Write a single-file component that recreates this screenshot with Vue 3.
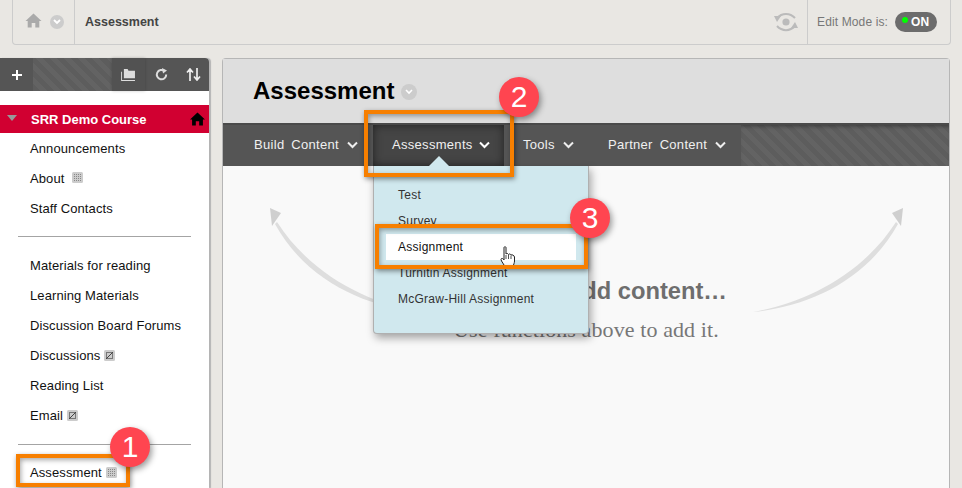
<script setup>
const groups = [
  [
    { label: 'Announcements' },
    { label: 'About', mark: 'grid', wide: true },
    { label: 'Staff Contacts' }
  ],
  [
    { label: 'Materials for reading' },
    { label: 'Learning Materials' },
    { label: 'Discussion Board Forums' },
    { label: 'Discussions', mark: 'slash' },
    { label: 'Reading List' },
    { label: 'Email', mark: 'slash' }
  ],
  [{ label: 'Assessment', mark: 'grid' }]
]
const tabs = [
  { label: 'Build Content' },
  { label: 'Assessments', active: true },
  { label: 'Tools' },
  { label: 'Partner Content' }
]
const menu = ['Test', 'Survey', 'Assignment', 'Turnitin Assignment', 'McGraw-Hill Assignment']
const homePath = 'M8 0.5 L16 8 L13.8 8 L13.8 14.5 L9.8 14.5 L9.8 10 L6.2 10 L6.2 14.5 L2.2 14.5 L2.2 8 L0 8 Z'
const shaft = 'M753 312 C800 304 860 278 896 222 L898 224 C866 282 806 307 753 312 Z'
const head = 'M903 208 L892 213 L901 226 Z'
</script>

<template>
  <div class="page">
    <header class="topbar">
      <div class="crumb-icons">
        <svg class="home" width="17" height="15" viewBox="0 0 16 15"><path :d="homePath" fill="#aaa" /></svg>
        <span class="round-btn">
          <svg width="8" height="6" viewBox="0 0 8 6"><path d="M1 1 L4 4 L7 1" fill="none" stroke="#fff" stroke-width="1.8" /></svg>
        </span>
      </div>
      <div class="crumb-title">Assessment</div>
      <svg class="eye" width="24" height="20" viewBox="0 0 24 20">
        <path d="M3 6 C8 0.5 16 0.5 21 6" fill="none" stroke="#bbb" stroke-width="2" />
        <path d="M21 14 C16 19.5 8 19.5 3 14" fill="none" stroke="#bbb" stroke-width="2" />
        <circle cx="12" cy="10" r="3.6" fill="#bbb" />
        <path d="M0 4 L7 4 L3 10 Z" fill="#bbb" />
        <path d="M24 16 L17 16 L21 10 Z" fill="#bbb" />
      </svg>
      <div class="edit-mode">
        <span class="edit-label">Edit Mode is:</span>
        <span class="toggle"><i class="led"></i>ON</span>
      </div>
    </header>

    <div class="columns">
      <aside class="sidebar">
        <div class="tools">
          <div class="tool plus">
            <svg width="12" height="12" viewBox="0 0 12 12"><path d="M6 1 V11 M1 6 H11" stroke="#fff" stroke-width="2" /></svg>
          </div>
          <div class="hatch tool-fill"></div>
          <div class="tool folder">
            <svg width="15" height="12" viewBox="0 0 16 13">
              <path d="M0 3 H1 V12 H15 V13 H0 Z M3 0 H7 L8 2 H15 V10 H3 Z" fill="#ddd" />
            </svg>
          </div>
          <div class="tool refresh">
            <svg width="13" height="13" viewBox="0 0 13 13">
              <path d="M9.5 3 A4.7 4.7 0 1 0 11.2 6.5" fill="none" stroke="#ddd" stroke-width="2" />
              <path d="M7 0 L12 2.5 L8 5.5 Z" fill="#ddd" />
            </svg>
          </div>
          <div class="tool sort">
            <svg width="15" height="13" viewBox="0 0 15 13">
              <path d="M4 13 V2 M1 4.5 L4 1 L7 4.5 M11 0 V11 M8 8.5 L11 12 L14 8.5" fill="none" stroke="#eee" stroke-width="1.7" />
            </svg>
          </div>
        </div>
        <div class="course">
          <i class="tri"></i>
          <span class="course-name">SRR Demo Course</span>
          <svg width="15" height="14" viewBox="0 0 16 15"><path :d="homePath" fill="#000" /></svg>
        </div>
        <template v-for="(group, g) in groups" :key="g">
          <hr v-if="g" class="rule" />
          <ul class="links">
            <li v-for="item in group" :key="item.label">
              <span>{{ item.label }}</span>
              <svg v-if="item.mark" class="mark" :class="{ wide: item.wide }" width="11" height="11" viewBox="0 0 11 11">
                <rect width="11" height="11" rx="1.5" fill="#ccc" />
                <path v-if="item.mark === 'grid'" d="M2 2.5 H9 M2 4.5 H9 M2 6.5 H9 M2 8.5 H9" stroke="#888" stroke-dasharray="1 1" />
                <template v-else>
                  <rect x="2.5" y="2.5" width="6" height="6" fill="none" stroke="#777" />
                  <path d="M2 9 L9 2" stroke="#444" stroke-width="1" />
                </template>
              </svg>
            </li>
          </ul>
        </template>
      </aside>

      <main class="content">
        <div class="title-row">
          <h1>Assessment</h1>
          <span class="round-btn">
            <svg width="8" height="6" viewBox="0 0 8 6"><path d="M1 1 L4 4 L7 1" fill="none" stroke="#fff" stroke-width="1.6" /></svg>
          </span>
        </div>
        <nav class="actions">
          <div class="tabs">
            <div v-for="tab in tabs" :key="tab.label" class="tab" :class="{ active: tab.active }">
              <span>{{ tab.label }}</span>
              <svg width="11" height="8" viewBox="0 0 11 8"><path d="M1 1.5 L5.5 6 L10 1.5" fill="none" stroke="#eee" stroke-width="2" /></svg>
            </div>
          </div>
          <div class="hatch nav-fill"></div>
        </nav>
        <section class="empty">
          <svg class="arrows" width="726" height="322" viewBox="223 166 726 322">
            <g>
              <path :d="shaft" fill="#dedede" />
              <path :d="head" fill="#cfcfcf" />
            </g>
            <g transform="matrix(-1 0 0 1 1173 0)">
              <path :d="shaft" fill="#dedede" />
              <path :d="head" fill="#cfcfcf" />
            </g>
          </svg>
          <h2>It's time to add content…</h2>
          <p>Use functions above to add it.</p>
        </section>
      </main>
    </div>

    <div class="dropdown">
      <i class="caret"></i>
      <div v-for="item in menu" :key="item" class="menu-item" :class="{ hot: item === 'Assignment' }">{{ item }}</div>
    </div>

    <svg class="cursor" width="16" height="22" viewBox="0 0 16 22">
      <path d="M4 1.5 C4 0.5 6 0.5 6 1.5 V8 C7 7 8 7.5 8.5 8.5 C9.5 7.5 10.5 8 11 9 C12 8.5 14 9 14.5 11 V15 C14.5 17 13.5 18.5 13 21 H5 C4.5 19 1 15 1 13.5 C1 12 3 12 4 14 Z" fill="#fff" stroke="#222" stroke-width="1" />
      <path d="M6 9 V13 M8.5 9 V13 M11 9.5 V13" stroke="#222" stroke-width="0.8" />
    </svg>

    <div class="callout box-one"></div>
    <div class="callout box-two"></div>
    <div class="callout box-three"></div>
    <div class="badge badge-one">1</div>
    <div class="badge badge-two">2</div>
    <div class="badge badge-three">3</div>
  </div>
</template>

<style scoped>
.page {
  position: relative;
  width: 962px;
  height: 488px;
  overflow: hidden;
  background: #e9e7e3;
  font-family: "Liberation Sans", Arial, sans-serif;
}

.topbar {
  display: flex;
  align-items: center;
  height: 45px;
  margin: 0 11px 0 12px;
  border: 1px solid #ccc;
  border-top: 0;
  border-radius: 0 0 4px 4px;
  box-sizing: border-box;
}
.crumb-icons {
  display: flex;
  align-items: center;
  gap: 8px;
  height: 100%;
  padding: 0 10px 0 12px;
  box-sizing: border-box;
  width: 62px;
  border-right: 1px solid #ccc;
}
.home { flex: none; margin-top: -3px; }
.round-btn {
  display: inline-flex;
  align-items: center;
  justify-content: center;
  flex: none;
  width: 14px;
  height: 14px;
  border-radius: 50%;
  background: #ccc;
}
.crumb-title {
  margin-left: 10px;
  font-size: 12.5px;
  font-weight: bold;
  color: #444;
  flex: 1;
}
.eye { margin-right: 9px; }
.edit-mode {
  display: flex;
  align-items: center;
  gap: 7px;
  width: 143px;
  height: 100%;
  padding-left: 9px;
  padding-bottom: 1px;
  box-sizing: border-box;
  border-left: 1px solid #ccc;
}
.edit-label { font-size: 12px; color: #777; letter-spacing: 0.13px; }
.toggle {
  position: relative;
  width: 42px;
  height: 20px;
  box-sizing: border-box;
  padding-left: 16px;
  border-radius: 10px;
  background: #6c6c6c;
  color: #fff;
  font-size: 12px;
  font-weight: bold;
  line-height: 20px;
}
.led {
  position: absolute;
  left: 7px;
  top: 5px;
  width: 6px;
  height: 6px;
  border-radius: 50%;
  background: #0f0;
}

.columns {
  display: flex;
  margin-top: 13px;
  height: 430px;
}

.sidebar {
  width: 209px;
  flex: none;
  background: #fff;
  border-radius: 0 4px 0 0;
  box-shadow: 2px 0 1px #b4b4b4;
  margin-right: 13px;
}
.tools {
  display: flex;
  height: 33px;
  background: #555;
  border-radius: 0 4px 0 0;
}
.tool {
  display: flex;
  align-items: center;
  justify-content: center;
  width: 32px;
  flex: none;
}
.plus { width: 33px; }
.tool-fill { width: 79px; }
.folder { width: 33px; background: #525252; box-shadow: 0 0 3px rgba(0,0,0,.2); }
.hatch {
  background: repeating-linear-gradient(45deg, #5d5d5d 0 5px, #636363 5px 10px);
}
.course {
  display: flex;
  align-items: center;
  height: 28px;
  margin-top: 14px;
  padding: 0 4px 0 7px;
  background: #d10031;
}
.tri {
  width: 0;
  height: 0;
  margin-top: -3px;
  border: 5.5px solid transparent;
  border-top: 6px solid #999;
  border-bottom: 0;
}
.course-name {
  flex: 1;
  margin-left: 14px;
  color: #fff;
  font-size: 13px;
  font-weight: bold;
}
.links {
  list-style: none;
  margin: 0;
  padding: 0;
}
.links li {
  display: flex;
  align-items: center;
  height: 30px;
  padding-left: 30px;
  font-size: 13px;
  letter-spacing: 0.1px;
  color: #111;
}
.mark { margin-left: 4px; flex: none; }
.mark.wide { margin-left: 8px; margin-top: -1px; }
.rule {
  height: 1px;
  margin: 13px 18px;
  border: 0;
  background: #a4a4a4;
}
.rule:nth-of-type(2) { margin: 14px 18px 12px; }

.content {
  width: 728px;
  flex: none;
  display: flex;
  flex-direction: column;
  border-radius: 4px 4px 0 0;
  border: 1px solid #b6b6b6;
  border-bottom: 0;
  box-sizing: border-box;
  height: 430px;
  background: #f9f9f9;
}
.title-row {
  display: flex;
  align-items: center;
  gap: 7px;
  height: 64px;
  padding: 0 0 0 30px;
  box-sizing: border-box;
  background: #dedede;
}
h1 {
  margin: 0;
  font-size: 24px;
  font-weight: bold;
  color: #000;
}
.title-row .round-btn { width: 16px; height: 16px; margin-top: 2px; }
.actions {
  display: flex;
  height: 43px;
  background: #555;
  border-top: 2px solid #4a4a4a;
  box-sizing: border-box;
}
.tabs { display: flex; width: 518px; flex: none; }
.tab {
  display: flex;
  align-items: center;
  gap: 8px;
  box-sizing: border-box;
  padding: 0 0 2px 19px;
  color: #f0f0f0;
  font-size: 13px;
  letter-spacing: 0.3px;
  word-spacing: 3px;
  white-space: nowrap;
}
.tab:nth-child(1) { width: 150px; padding-left: 31px; gap: 8px; }
.tab:nth-child(2) { width: 131px; gap: 6px; }
.tab:nth-child(3) { width: 85px; }
.tab.active {
  background: #454545;
  box-shadow: inset 0 0 10px rgba(0,0,0,.5);
}
.tab.active svg path { stroke: #fff; }
.nav-fill { flex: 1; box-shadow: inset 0 4px 4px -3px rgba(0,0,0,.4); }
.empty {
  position: relative;
  flex: 1;
  text-align: center;
  color: #6e6e6e;
}
.arrows { position: absolute; left: 0; top: 0; }
h2 {
  position: relative;
  margin: 112px 0 0;
  font-size: 23.7px;
  font-weight: bold;
  color: #6e6e6e;
}
.empty p {
  position: relative;
  margin: 12px 0 0;
  font-family: "Liberation Serif", serif;
  font-size: 22px;
  letter-spacing: 0.1px;
  color: #777;
}

.dropdown {
  position: absolute;
  left: 373px;
  top: 166px;
  width: 216px;
  height: 168px;
  box-sizing: border-box;
  padding-top: 16px;
  background: #d0e8ee;
  border: 1px solid #b0b0b0;
  border-top: 0;
  border-radius: 0 0 4px 4px;
  box-shadow: 2px 4px 8px rgba(0,0,0,.35);
}
.caret {
  position: absolute;
  left: 55px;
  top: -10px;
  width: 0;
  height: 0;
  border: 10px solid transparent;
  border-top: 0;
  border-bottom: 10px solid #d0e8ee;
}
.menu-item {
  height: 26px;
  line-height: 26px;
  margin: 0 12px;
  padding-left: 12px;
  font-size: 12px;
  letter-spacing: 0.25px;
  color: #333;
}
.menu-item.hot { background: #fff; color: #111; }

.cursor { position: absolute; left: 500px; top: 246px; }

.callout {
  position: absolute;
  box-sizing: border-box;
  border: 4px solid #f77f00;
  box-shadow: 1px 2px 5px rgba(0,0,0,.45), inset 1px 2px 5px rgba(0,0,0,.35);
}
.box-one { left: 16px; top: 454px; width: 114px; height: 33px; }
.box-two { left: 364px; top: 110px; width: 150px; height: 67px; }
.box-three { left: 375px; top: 224px; width: 213px; height: 45px; }

.badge {
  position: absolute;
  width: 40px;
  height: 40px;
  border-radius: 50%;
  background: #ff4550;
  color: #fff;
  font-size: 30px;
  line-height: 40px;
  text-align: center;
  box-shadow: 2px 3px 6px rgba(0,0,0,.4);
}
.badge-one { left: 110px; top: 427px; }
.badge-two { left: 499px; top: 77px; }
.badge-three { left: 570px; top: 198px; }
</style>

<style>
html, body { margin: 0; overflow: hidden; }
</style>
